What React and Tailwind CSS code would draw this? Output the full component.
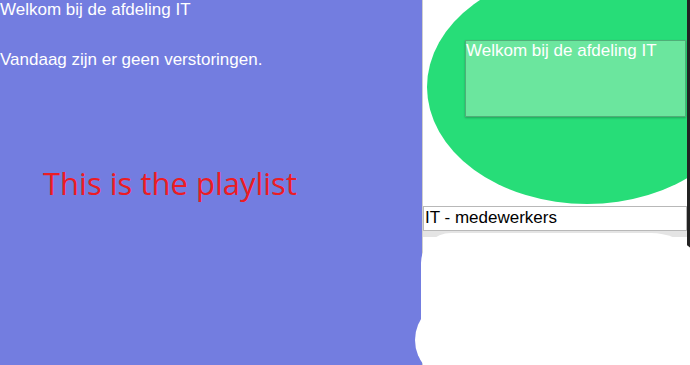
import React from "react";

const arial = { fontFamily: '"Liberation Sans", Arial, sans-serif' };

const App = () => {
  return (
    <div className="relative flex h-[365px] w-[690px] overflow-hidden bg-white">
      {/* left panel */}
      <div className="w-[422px] shrink-0 bg-[#737de0] text-white" style={arial}>
        <p className="text-[17px] leading-[20px]">Welkom bij de afdeling IT</p>
        <p className="mt-[30px] text-[17px] leading-[20px]">Vandaag zijn er geen verstoringen.</p>
        <p
          className="ml-[43px] mt-[94px] text-[31px] leading-[38px] text-[#ec1c24]"
          style={{ fontFamily: '"Open Sans", "Noto Sans", sans-serif' }}>
          This is the playlist
        </p>
      </div>

      {/* right panel */}
      <div className="flex w-[265px] shrink-0 flex-col border-l border-[#cfcfcf] bg-white">
        <div className="relative h-[206px] overflow-hidden">
          <div className="absolute left-[4px] top-[-30px] h-[234px] w-[320px] rounded-[50%] bg-[#27dd78]" />
          <div
            className="relative ml-[42px] mt-[40px] h-[77px] w-[221px] border border-[#4fae78] bg-[#6be69e] text-[17px] leading-[20px] text-white shadow-[0_1px_2px_rgba(0,0,0,0.25)]"
            style={arial}>
            Welkom bij de afdeling IT
          </div>
        </div>
        <div
          className="h-[25px] w-[264px] border border-[#b8b8b8] bg-white pl-[1px] text-[17px] leading-[22px] text-black"
          style={arial}>
          IT - medewerkers
        </div>
        <div className="h-[6px] bg-[#e4e4e4]" />
      </div>
      <div className="w-[3px] shrink-0 bg-[#222]" />

      {/* white redaction blobs */}
      <div className="absolute left-[421px] top-[233px] h-[110px] w-[290px] rounded-tl-[30px] rounded-tr-[60px] bg-white" />
      <div className="absolute left-[415px] top-[300px] h-[80px] w-[300px] rounded-l-[40px] bg-white" />
    </div>
  );
};

export default App;
